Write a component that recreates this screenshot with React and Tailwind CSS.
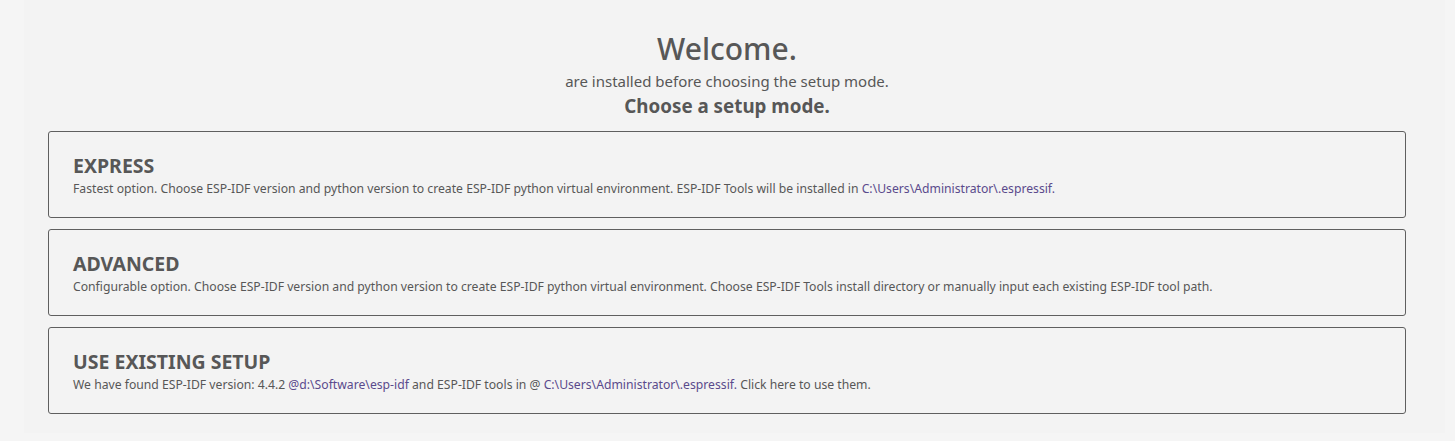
const modes = [
  {
    title: "EXPRESS",
    body: (
      <>
        Fastest option. Choose ESP-IDF version and python version to create ESP-IDF python virtual environment. ESP-IDF
        Tools will be installed in <span className="text-[#5a4a8c]">C:\Users\Administrator\.espressif.</span>
      </>
    ),
  },
  {
    title: "ADVANCED",
    body: (
      <>
        Configurable option. Choose ESP-IDF version and python version to create ESP-IDF python virtual environment.
        Choose ESP-IDF Tools install directory or manually input each existing ESP-IDF tool path.
      </>
    ),
  },
  {
    title: "USE EXISTING SETUP",
    body: (
      <>
        We have found ESP-IDF version: 4.4.2 <span className="text-[#5a4a8c]">@d:\Software\esp-idf</span> and ESP-IDF
        tools in @ <span className="text-[#5a4a8c]">C:\Users\Administrator\.espressif.</span> Click here to use them.
      </>
    ),
  },
];

export default function App() {
  return (
    <div className="h-[441px] w-full bg-[#f5f5f5] pl-[24px] pr-[10px] pb-[8px] font-['Noto_Sans',sans-serif] text-[#575757]">
      <div className="h-full bg-[#f3f3f3] pl-[24px] pr-[39px] pt-[31px]">
        <div className="text-center">
          <h1 className="text-[30px] font-medium leading-[36px]">Welcome.</h1>
          <p className="mt-[4px] text-[15px] leading-[20px]">are installed before choosing the setup mode.</p>
          <h2 className="mt-[3px] text-[18.8px] font-bold leading-[24px]">Choose a setup mode.</h2>
        </div>
        <div className="mt-[13px] flex flex-col gap-[11px]">
          {modes.map((m) => (
            <div
              key={m.title}
              className="h-[87px] cursor-pointer rounded-[3px] border border-[#5f5f5f] px-[24px] pt-[22px]"
            >
              <h3 className="text-[19.5px] font-bold leading-[24px]">{m.title}</h3>
              <p className="mt-[3px] text-[12.2px] leading-[16px]">{m.body}</p>
            </div>
          ))}
        </div>
      </div>
    </div>
  );
}
